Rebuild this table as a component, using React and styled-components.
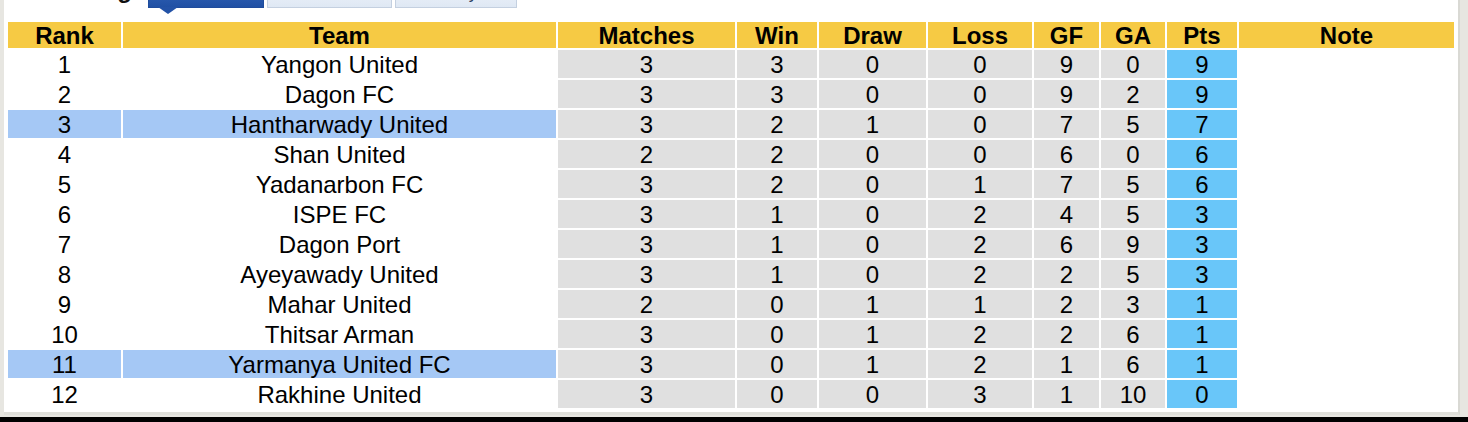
import React from "react";
import styled, { createGlobalStyle } from "styled-components";

const GlobalStyle = createGlobalStyle`
  html, body {
    margin: 0;
    padding: 0;
    background: #e7e6e1;
    font-family: "Liberation Sans", Arial, Helvetica, sans-serif;
  }
`;

const columns = [
  { key: "rank", label: "Rank", width: 113 },
  { key: "team", label: "Team", width: 433 },
  { key: "matches", label: "Matches", width: 177 },
  { key: "win", label: "Win", width: 80 },
  { key: "draw", label: "Draw", width: 107 },
  { key: "loss", label: "Loss", width: 104 },
  { key: "gf", label: "GF", width: 65 },
  { key: "ga", label: "GA", width: 64 },
  { key: "pts", label: "Pts", width: 70 },
  { key: "note", label: "Note", width: 215 },
];

const teams = [
  [1, "Yangon United", 3, 3, 0, 0, 9, 0, 9],
  [2, "Dagon FC", 3, 3, 0, 0, 9, 2, 9],
  [3, "Hantharwady United", 3, 2, 1, 0, 7, 5, 7, true],
  [4, "Shan United", 2, 2, 0, 0, 6, 0, 6],
  [5, "Yadanarbon FC", 3, 2, 0, 1, 7, 5, 6],
  [6, "ISPE FC", 3, 1, 0, 2, 4, 5, 3],
  [7, "Dagon Port", 3, 1, 0, 2, 6, 9, 3],
  [8, "Ayeyawady United", 3, 1, 0, 2, 2, 5, 3],
  [9, "Mahar United", 2, 0, 1, 1, 2, 3, 1],
  [10, "Thitsar Arman", 3, 0, 1, 2, 2, 6, 1],
  [11, "Yarmanya United FC", 3, 0, 1, 2, 1, 6, 1, true],
  [12, "Rakhine United", 3, 0, 0, 3, 1, 10, 0],
];

const Panel = styled.div`
  margin-left: 4px;
  width: 1456px;
  box-sizing: border-box;
  background: #fff;
  border-right: 2px solid #d9d9d4;
  border-bottom: 3px solid #dfdfda;
  padding: 0 2px 2px 2px;
`;

const TopBar = styled.div`
  height: 20px;
  overflow: hidden;
  display: flex;
  align-items: flex-start;
`;

const Title = styled.div`
  width: 142px;
  padding-right: 16px;
  box-sizing: border-box;
  text-align: right;
  font-size: 24px;
  font-weight: bold;
  line-height: 24px;
  margin-top: -22px;
  color: #111;
`;

const Tabs = styled.div`
  display: flex;
  gap: 3px;
`;

const Tab = styled.div`
  position: relative;
  width: ${(p) => p.$w}px;
  height: 30px;
  margin-top: -22px;
  box-sizing: border-box;
  font-size: 18px;
  line-height: 26px;
  text-align: center;
  color: ${(p) => (p.$active ? "#fff" : "#2b3f63")};
  background: ${(p) =>
    p.$active
      ? "linear-gradient(#3a6cc0, #2050a4)"
      : "linear-gradient(#f3f7fc, #dfe8f4)"};
  border: 1px solid ${(p) => (p.$active ? "#1f4c9c" : "#c4d0e0")};
  &::after {
    content: "";
    display: ${(p) => (p.$active ? "block" : "none")};
    position: absolute;
    left: 9px;
    bottom: -7px;
    border-left: 10px solid transparent;
    border-right: 10px solid transparent;
    border-top: 7px solid #2352a6;
  }
`;

const Table = styled.table`
  border-collapse: separate;
  border-spacing: 2px;
  table-layout: fixed;
  width: 1450px;
`;

const Head = styled.th`
  height: 25px;
  padding: 1px 0 0;
  background: #f6ca44;
  color: #000;
  font-size: 24px;
  font-weight: bold;
  line-height: 24px;
  text-align: center;
  vertical-align: middle;
`;

const cellBg = (p) => {
  if (p.$kind === "pts") return "#69c6f9";
  if (p.$kind === "stat") return "#e0e0e0";
  if (p.$kind === "name" && p.$hl) return "#a5c8f5";
  return "#fff";
};

const Cell = styled.td`
  height: 26px;
  padding: 2px 0 0;
  background: ${cellBg};
  color: #000;
  font-size: 24px;
  line-height: 24px;
  text-align: center;
  vertical-align: middle;
  white-space: nowrap;
`;

const Footer = styled.div`
  margin-top: 2px;
  height: 10px;
  background: #000;
`;

export default function App() {
  return (
    <>
      <GlobalStyle />
      <Panel>
        <TopBar>
          <Title>Standing</Title>
          <Tabs>
            <Tab $w={116} $active>Total</Tab>
            <Tab $w={125}>Home</Tab>
            <Tab $w={122}>Away</Tab>
          </Tabs>
        </TopBar>
        <Table>
          <colgroup>
            {columns.map((c) => (
              <col key={c.key} style={{ width: c.width }} />
            ))}
          </colgroup>
          <thead>
            <tr>
              {columns.map((c) => (
                <Head key={c.key}>{c.label}</Head>
              ))}
            </tr>
          </thead>
          <tbody>
            {teams.map((t) => {
              const hl = !!t[9];
              return (
                <tr key={t[0]}>
                  <Cell $kind="name" $hl={hl}>{t[0]}</Cell>
                  <Cell $kind="name" $hl={hl}>{t[1]}</Cell>
                  {t.slice(2, 8).map((v, i) => (
                    <Cell key={i} $kind="stat">{v}</Cell>
                  ))}
                  <Cell $kind="pts">{t[8]}</Cell>
                  <Cell $kind="note" />
                </tr>
              );
            })}
          </tbody>
        </Table>
      </Panel>
      <Footer />
    </>
  );
}
